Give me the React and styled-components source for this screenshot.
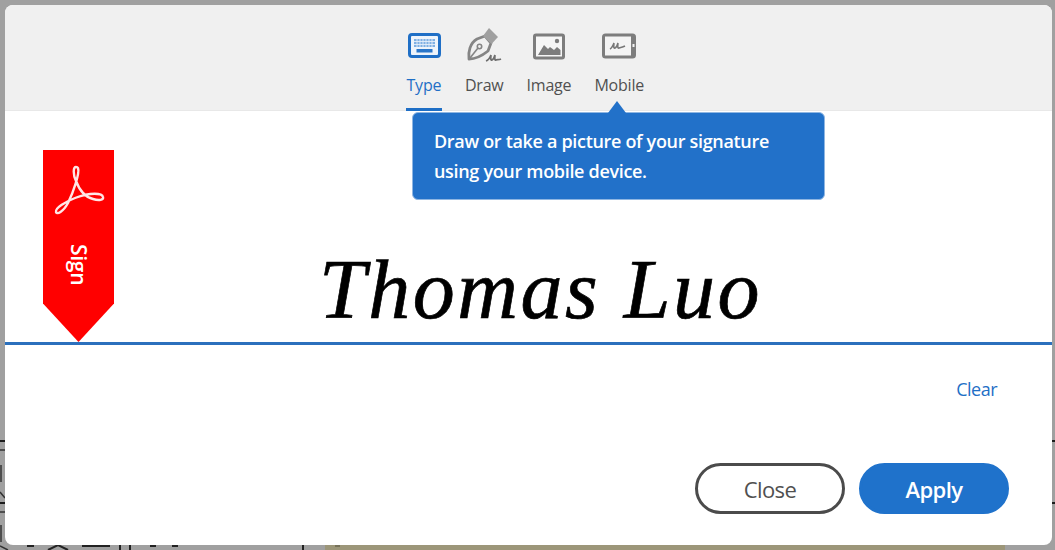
import React from "react"
import styled, { createGlobalStyle } from "styled-components"

const GlobalStyle = createGlobalStyle`
  html, body {
    margin: 0;
    padding: 0;
    background: #a0a0a0;
    overflow: hidden;
  }
  * {
    box-sizing: border-box;
  }
`

const Page = styled.div`
  position: relative;
  width: 1055px;
  height: 550px;
  padding: 5px 3px 5px 5px;
  font-family: "Open Sans", "Noto Sans", sans-serif;
`

// what shows behind the dialog, along its edges
const BackdropStrip = styled.div`
  position: absolute;
  left: 325px;
  bottom: 0;
  width: 680px;
  height: 5px;
  background: #9c9679;
`

const BackdropRule = styled.div`
  position: absolute;
  left: 0;
  right: 0;
  top: ${props => props.$top}px;
  height: 2px;
  background: #1c1c1c;
`

const BackdropMarks = styled.svg`
  position: absolute;
  left: 0;
  top: 440px;
  width: 340px;
  height: 110px;
`

const Modal = styled.div`
  position: relative;
  display: flex;
  flex-direction: column;
  height: 540px;
  background: #fff;
  border-radius: 8px;
  overflow: hidden;
`

const Header = styled.div`
  display: flex;
  justify-content: center;
  gap: 23px;
  height: 106px;
  padding-right: 7px;
  background: #f0f0f0;
  border-bottom: 1px solid #e8e8e8;
`

const Tab = styled.div`
  display: flex;
  flex-direction: column;
  align-items: center;
  padding-top: 25px;
  height: 106px;
  border-bottom: 3px solid ${props => (props.$active ? "#1f6fc6" : "transparent")};
`

const TabIcon = styled.svg`
  display: block;
  width: 36px;
  height: 32px;
  overflow: visible;
`

const TabLabel = styled.span`
  margin-top: 11px;
  font-size: 16px;
  line-height: 24px;
  letter-spacing: -0.2px;
  color: ${props => (props.$active ? "#1f6fc6" : "#505050")};
`

const Tooltip = styled.div`
  position: absolute;
  left: 407px;
  top: 107px;
  width: 413px;
  height: 88px;
  padding: 13px 21px;
  background: #2271c9;
  border: 1px solid #8fb6e2;
  border-radius: 6px;
  font-size: 18px;
  font-weight: 600;
  line-height: 30px;
  letter-spacing: -0.32px;
  color: #fff;

  &::before {
    content: "";
    position: absolute;
    left: 195px;
    top: -12px;
    border-left: 9px solid transparent;
    border-right: 9px solid transparent;
    border-bottom: 12px solid #2271c9;
  }
`

const SignatureArea = styled.div`
  display: flex;
  align-items: flex-end;
  justify-content: center;
  height: 234px;
  padding-left: 24px;
  border-bottom: 3px solid #2b70bd;
`

const SignatureText = styled.div`
  font-family: "Liberation Serif", serif;
  font-style: italic;
  font-size: 84px;
  line-height: 100px;
  letter-spacing: 2.5px;
  -webkit-text-stroke: 0.7px #000;
  color: #000;
  white-space: nowrap;
  margin-bottom: 2px;
`

const Ribbon = styled.div`
  position: absolute;
  left: 38px;
  top: 145px;
  display: flex;
  flex-direction: column;
  align-items: center;
  width: 71px;
  height: 192px;
  padding-top: 15px;
  background: #ff0000;
  clip-path: polygon(0 0, 100% 0, 100% 80%, 50% 100%, 0 80%);
`

const RibbonLogo = styled.svg`
  display: block;
  width: 52px;
  height: 52px;
`

const RibbonLabel = styled.span`
  margin-top: 27px;
  writing-mode: vertical-rl;
  font-size: 21px;
  font-weight: 600;
  line-height: 26px;
  letter-spacing: -0.3px;
  color: #fff;
`

const ClearRow = styled.div`
  display: flex;
  justify-content: flex-end;
  padding: 32px 55px 0 0;
`

const ClearLink = styled.span`
  font-size: 18px;
  line-height: 24px;
  letter-spacing: -0.5px;
  color: #1f6fc6;
`

const Footer = styled.div`
  display: flex;
  justify-content: flex-end;
  gap: 14px;
  padding: 62px 43px 0 0;
`

const PillButton = styled.div`
  display: flex;
  align-items: center;
  justify-content: center;
  width: 150px;
  height: 51px;
  border-radius: 26px;
  border: 3px solid ${props => (props.$primary ? "#1f72cb" : "#4b4b4b")};
  background: ${props => (props.$primary ? "#1f72cb" : "#fff")};
  color: ${props => (props.$primary ? "#fff" : "#505050")};
  font-size: 22px;
  font-weight: ${props => (props.$primary ? 600 : 400)};
  letter-spacing: -0.6px;
`

const KeyboardIcon = () => (
  <TabIcon viewBox="0 0 36 32">
    <rect x="3.5" y="4.5" width="30" height="22" rx="2.5" fill="#eef4fb" stroke="#1f6fc6" strokeWidth="3" />
    <rect x="8" y="9" width="21" height="8" fill="#7fb0e3" />
    <path d="M8 11.5H29M8 14.5H29M11 9V17M14 9V17M17 9V17M20 9V17M23 9V17M26 9V17" stroke="#e4eefa" strokeWidth="0.9" />
    <rect x="10.5" y="19" width="16" height="3.5" fill="#2a76c9" />
  </TabIcon>
)

const PenIcon = () => (
  <TabIcon viewBox="0 0 36 32">
    <path d="M3 29C2 22 4 13 11 9L19 6L25 13L22 21C17 25 10 29 3 29Z" fill="none" stroke="#858585" strokeWidth="2.8" strokeLinejoin="round" />
    <path d="M4 28L12 18" stroke="#858585" strokeWidth="1.6" />
    <circle cx="13.5" cy="16.5" r="2.2" fill="none" stroke="#858585" strokeWidth="1.6" />
    <path d="M17 6L23 -2L32 7L25.5 14Z" fill="#a0a0a0" />
    <path d="M20 31C23 30 25 25 25 25C25 25 24 31 26 30C28 29 29 25 29 25C29 25 28 31 30 30C31 29.5 33 30 35 29" fill="none" stroke="#6f6f6f" strokeWidth="1.8" />
  </TabIcon>
)

const ImageIcon = () => (
  <TabIcon viewBox="0 0 36 32" preserveAspectRatio="xMidYMid meet">
    <rect x="3.5" y="5" width="29" height="23" rx="1.5" fill="#f6f6f6" stroke="#7d7d7d" strokeWidth="3" />
    <path d="M7 25L13 15L17 19L19 17L23 20L26 17L29.5 20V25Z" fill="#7d7d7d" />
    <circle cx="26" cy="11" r="2.2" fill="#7d7d7d" />
  </TabIcon>
)

const MobileIcon = () => (
  <TabIcon viewBox="0 0 36 32">
    <path d="M4.5 3.5H31.5Q35 3.5 35 7V25Q35 28.5 31.5 28.5H4.5Q1 28.5 1 25V7Q1 3.5 4.5 3.5Z" fill="#7d7d7d" />
    <rect x="4" y="6.5" width="26" height="19" fill="#f4f4f4" />
    <rect x="31.5" y="14" width="2" height="3" fill="#f4f4f4" />
    <path d="M9 19C11 18 13 13 13 13C13 13 12 19 14 18C16 17 17 13 17 13C17 13 16 19 18 18C20 17.5 22 17 24 16" fill="none" stroke="#777" strokeWidth="1.6" />
  </TabIcon>
)

const tabs = [
  { label: "Type", Icon: KeyboardIcon, active: true },
  { label: "Draw", Icon: PenIcon },
  { label: "Image", Icon: ImageIcon },
  { label: "Mobile", Icon: MobileIcon },
]

export default function App() {
  return (
    <>
      <GlobalStyle />
      <Page>
        <BackdropStrip />
        <BackdropRule $top={440} />
        <BackdropRule $top={502} />
        <BackdropMarks viewBox="0 0 340 110">
          <path d="M0 10H5M1 25V42M0 52L5 58M0 72H5M1 85V102M0 106L8 110" stroke="#333" strokeWidth="1.5" fill="none" />
          <path d="M27 106H34M48 110L58 105L68 110M82 106H110M120 105V110M130 105V110M150 106H156M172 106H178M303 105V110" stroke="#222" strokeWidth="2" fill="none" />
          <path d="M335 106H345" stroke="#6b664f" strokeWidth="1.5" fill="none" />
        </BackdropMarks>
        <Modal>
          <Header>
            {tabs.map(({ label, Icon, active }) => (
              <Tab key={label} $active={active}>
                <Icon />
                <TabLabel $active={active}>{label}</TabLabel>
              </Tab>
            ))}
          </Header>
          <SignatureArea>
            <SignatureText>Thomas Luo</SignatureText>
          </SignatureArea>
          <ClearRow>
            <ClearLink>Clear</ClearLink>
          </ClearRow>
          <Footer>
            <PillButton>Close</PillButton>
            <PillButton $primary>Apply</PillButton>
          </Footer>
          <Tooltip>
            Draw or take a picture of your signature
            <br />
            using your mobile device.
          </Tooltip>
          <Ribbon>
            <RibbonLogo viewBox="0 0 52 52">
              <path
                d="M23 2C20 2 20 10 23 16C26 24 32 32 40 34C46 36 51 35 50 32C49 28 38 27 22 33C12 37 2 43 3 47C4 50 10 47 15 38C20 28 27 8 25 3C24.5 2 24 2 23 2Z"
                fill="none"
                stroke="#ffe6e6"
                strokeWidth="2.4"
              />
            </RibbonLogo>
            <RibbonLabel>Sign</RibbonLabel>
          </Ribbon>
        </Modal>
      </Page>
    </>
  )
}
